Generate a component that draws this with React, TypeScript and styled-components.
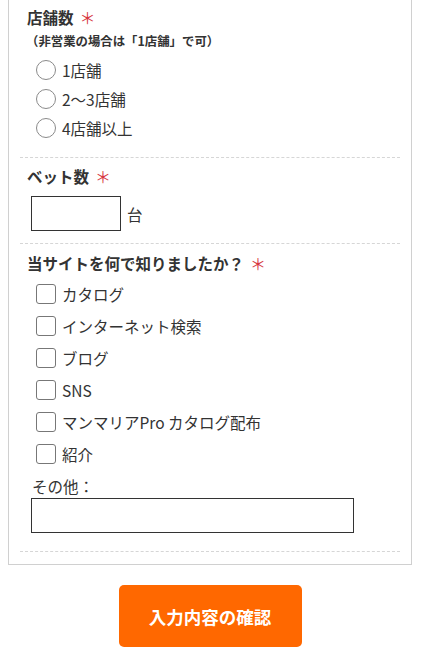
import React from 'react';
import styled, { createGlobalStyle } from 'styled-components';

const GlobalStyle = createGlobalStyle`
  html, body {
    margin: 0;
    padding: 0;
    background: #fff;
  }
  body {
    font-family: "Noto Sans CJK JP", "Liberation Sans", sans-serif;
    color: #333;
  }
`;

const Page = styled.div`
  padding: 0 9px 0 8px;
`;

const FormBox = styled.div`
  border: 1px solid #d0d0d0;
  border-top: none;
  padding: 0 11px 12px;
`;

const Section = styled.div<{ $top: number; $bottom: number }>`
  display: flex;
  flex-direction: column;
  padding: ${(p) => p.$top}px 0 ${(p) => p.$bottom}px;
  border-bottom: 1px dashed #d6d6d6;
`;

const Heading = styled.div`
  display: flex;
  align-items: center;
  padding-left: 7px;
  height: 22px;
  font-size: 15.5px;
  font-weight: bold;
  color: #333;
`;

const Required = styled.span`
  color: #d7373f;
  font-size: 16px;
  font-weight: normal;
  margin-left: 6px;
  line-height: 1;
`;

const Note = styled.div`
  margin-top: 4px;
  padding-left: 6px;
  height: 18px;
  line-height: 18px;
  font-size: 12.4px;
  font-weight: bold;
  color: #333;
`;

const OptionList = styled.div<{ $top: number }>`
  display: flex;
  flex-direction: column;
  margin-top: ${(p) => p.$top}px;
  padding-left: 16px;
`;

const Option = styled.label<{ $h: number }>`
  display: flex;
  align-items: center;
  height: ${(p) => p.$h}px;
  font-size: 15.5px;
  color: #333;
`;

const Radio = styled.input.attrs({ type: 'radio' })`
  appearance: none;
  margin: 0 6px 0 0;
  width: 20px;
  height: 20px;
  border: 1px solid #8a8a8a;
  border-radius: 50%;
  background: #fff;
  box-sizing: border-box;
`;

const Checkbox = styled.input.attrs({ type: 'checkbox' })`
  appearance: none;
  margin: 0 6px 0 0;
  width: 20px;
  height: 20px;
  border: 1px solid #777;
  border-radius: 3px;
  background: #fff;
  box-sizing: border-box;
`;

const InputRow = styled.div`
  display: flex;
  align-items: center;
  margin-top: 9px;
  padding-left: 11px;
`;

const TextBox = styled.input<{ $w: number }>`
  width: ${(p) => p.$w}px;
  height: 35px;
  box-sizing: border-box;
  border: 1px solid #333;
  border-radius: 0;
  margin: 0;
  padding: 0 6px;
  font-size: 15px;
`;

const Unit = styled.span`
  margin-left: 6px;
  font-size: 15.5px;
  color: #333;
`;

const OtherLabel = styled.div`
  margin-top: 5px;
  padding-left: 12px;
  height: 22px;
  line-height: 22px;
  font-size: 15.5px;
  color: #333;
`;

const OtherInput = styled.div`
  margin-top: 1px;
  padding-left: 11px;
  display: flex;
`;

const ButtonRow = styled.div`
  display: flex;
  justify-content: center;
  margin-top: 20px;
`;

const SubmitButton = styled.button`
  width: 183px;
  height: 62px;
  border: none;
  border-radius: 5px;
  background: #ff6800;
  color: #fff;
  font-family: "Noto Sans CJK JP", sans-serif;
  font-size: 17.5px;
  font-weight: bold;
  cursor: pointer;
`;

const shopOptions = ['1店舗', '2〜3店舗', '4店舗以上'];
const sourceOptions = [
  'カタログ',
  'インターネット検索',
  'ブログ',
  'SNS',
  'マンマリアPro カタログ配布',
  '紹介',
];

export default function App() {
  return (
    <>
      <GlobalStyle />
      <Page>
        <FormBox>
          <Section $top={6} $bottom={15}>
            <Heading>
              店舗数<Required>＊</Required>
            </Heading>
            <Note>（非営業の場合は「1店舗」で可）</Note>
            <OptionList $top={5}>
              {shopOptions.map((o) => (
                <Option key={o} $h={29}>
                  <Radio name="shops" />
                  {o}
                </Option>
              ))}
            </OptionList>
          </Section>

          <Section $top={7} $bottom={12}>
            <Heading>
              ベット数<Required>＊</Required>
            </Heading>
            <InputRow>
              <TextBox $w={90} />
              <Unit>台</Unit>
            </InputRow>
          </Section>

          <Section $top={8} $bottom={18}>
            <Heading>
              当サイトを何で知りましたか？<Required>＊</Required>
            </Heading>
            <OptionList $top={4}>
              {sourceOptions.map((o) => (
                <Option key={o} $h={32}>
                  <Checkbox />
                  {o}
                </Option>
              ))}
            </OptionList>
            <OtherLabel>その他：</OtherLabel>
            <OtherInput>
              <TextBox $w={323} />
            </OtherInput>
          </Section>
        </FormBox>
        <ButtonRow>
          <SubmitButton>入力内容の確認</SubmitButton>
        </ButtonRow>
      </Page>
    </>
  );
}
